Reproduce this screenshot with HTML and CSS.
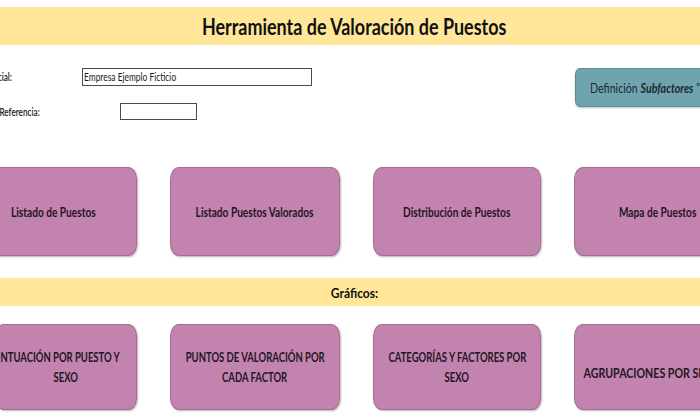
FILE: index.html
```html
<!DOCTYPE html>
<html lang="es">
<head>
<meta charset="utf-8">
<title>Herramienta de Valoración de Puestos</title>
<link rel="stylesheet" href="styles.css">
</head>
<body>
<div class="sheet">
  <header class="band band--title"><span class="sq title">Herramienta de Valoración de Puestos</span></header>

  <section class="info">
    <div class="form">
      <div class="form-row form-row--social">
        <div class="label label--social"><span class="sq sq--right">Razón Social:</span></div>
        <div class="field field--social"><span class="sq sq--left">Empresa Ejemplo Ficticio</span></div>
      </div>
      <div class="form-row form-row--ref">
        <div class="label label--ref"><span class="sq sq--right">Referencia:</span></div>
        <div class="field field--ref"></div>
      </div>
    </div>
    <div class="def-btn"><span class="sq sq--left">Definición <b><i>Subfactores</i></b> "Factores"</span></div>
  </section>

  <section class="btn-row btn-row--main">
    <div class="btn"><span class="sq">Listado de Puestos</span></div>
    <div class="btn"><span class="sq">Listado Puestos Valorados</span></div>
    <div class="btn"><span class="sq">Distribución de Puestos</span></div>
    <div class="btn"><span class="sq">Mapa de Puestos</span></div>
  </section>

  <div class="band band--sub"><span class="sq sub">Gráficos:</span></div>

  <section class="btn-row btn-row--charts">
    <div class="btn btn--narrow"><span class="sq caps line-shift">PUNTUACIÓN POR PUESTO Y</span><span class="sq caps">SEXO</span></div>
    <div class="btn"><span class="sq caps">PUNTOS DE VALORACIÓN POR</span><span class="sq caps">CADA FACTOR</span></div>
    <div class="btn"><span class="sq caps">CATEGORÍAS Y FACTORES POR</span><span class="sq caps">SEXO</span></div>
    <div class="btn btn--low"><span class="sq caps caps--big">AGRUPACIONES POR SEXO</span></div>
  </section>
</div>
</body>
</html>
```

FILE: styles.css
```css
* { box-sizing: border-box; }

html, body {
  margin: 0;
  padding: 0;
  background: #ffffff;
}

.sheet {
  --sq: 0.78;
  width: 700px;
  height: 420px;
  overflow: hidden;
  background: #ffffff;
  font-family: Lato, "Open Sans", "Liberation Sans", sans-serif;
  color: #141414;
  display: flex;
  flex-direction: column;
}

.sq {
  display: inline-block;
  white-space: nowrap;
  transform: scaleX(var(--sq));
  transform-origin: center center;
}
.sq--left { transform-origin: left center; }
.sq--right { transform-origin: right center; }

.band {
  flex: none;
  background: #ffe699;
  display: flex;
  align-items: center;
  justify-content: center;
  padding-left: 9px;
}
.band--title {
  margin-top: 7px;
  height: 38px;
}
.title {
  font-size: 23px;
  font-weight: 700;
  color: #111111;
}
.band--sub {
  margin-top: 22px;
  height: 28px;
}
.sub {
  --sq: 0.86;
  font-size: 14px;
  font-weight: 700;
  color: #111111;
}

/* info area */
.info {
  flex: none;
  height: 122px;
  padding-top: 23px;
  display: flex;
  align-items: flex-start;
}
.form {
  display: flex;
  flex-direction: column;
  gap: 17px;
}
.form-row {
  display: flex;
  align-items: center;
}
.label {
  display: flex;
  justify-content: flex-end;
  font-size: 10.5px;
  font-weight: 600;
  color: #1a1a1a;
}
.label--social { width: 12px; }
.label--ref { width: 40px; }

.field {
  background: #ffffff;
  border: 1px solid #4a4a4a;
  display: flex;
  align-items: center;
  padding-left: 1px;
  font-size: 10.5px;
  color: #1a1a1a;
}
.field .sq { --sq: 0.8; }
.field--social {
  margin-left: 70px;
  width: 230px;
  height: 18px;
}
.field--ref {
  margin-left: 80px;
  width: 77px;
  height: 17px;
}

.def-btn {
  margin-left: auto;
  margin-right: -60px;
  width: 185px;
  height: 39px;
  background: #6fa3ae;
  border: 1px solid #5b8d99;
  border-radius: 5px / 7px;
  box-shadow: 0 1px 2px rgba(0, 0, 0, 0.25);
  display: flex;
  align-items: center;
  padding-left: 14px;
  font-size: 14px;
  color: #1b2a33;
}
.def-btn .sq { --sq: 0.76; }
.def-btn b { font-weight: 700; }

/* button rows */
.btn-row {
  flex: none;
  display: grid;
  grid-template-columns: 168px 170px 168px 168px;
  column-gap: 33px;
  margin-left: -31px;
}
.btn-row--main { height: 89px; }
.btn-row--charts {
  margin-top: 18px;
  height: 86px;
}

.btn {
  background: #c283ae;
  border: 1px solid #a46e93;
  border-radius: 9px / 12px;
  box-shadow: 1px 1px 2px rgba(60, 40, 55, 0.35);
  display: flex;
  flex-direction: column;
  align-items: center;
  justify-content: center;
  font-size: 13px;
  font-weight: 700;
  color: #24161f;
  line-height: 20px;
}
.btn--narrow {
  width: 142px;
  justify-self: end;
}
.btn--low {
  padding-top: 12px;
  padding-right: 12px;
}
.line-shift { margin-right: 24px; }
.caps { --sq: 0.73; }
.caps--big {
  --sq: 0.76;
  font-size: 14px;
}
```
